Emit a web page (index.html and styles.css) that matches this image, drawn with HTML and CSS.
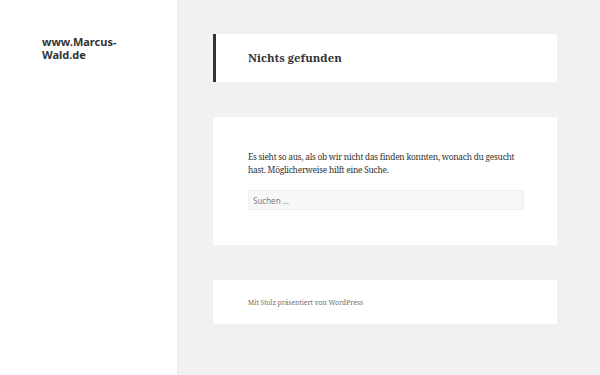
FILE: index.html
```html
<!DOCTYPE html>
<html lang="de">
<head>
    <meta charset="UTF-8">
    <meta name="viewport" content="width=device-width, initial-scale=1.0">
    <title>Nichts gefunden - www.Marcus-Wald.de</title>
    <link rel="stylesheet" href="styles.css">
</head>
<body>
    <div class="site">
        <div class="sidebar">
            <p class="site-title">www.Marcus-Wald.de</p>
        </div>

        <div class="site-content">
            <header class="page-header">
                <h1 class="page-title">Nichts gefunden</h1>
            </header>

            <section class="no-results">
                <p class="no-results-text">
                    Es sieht so aus, als ob wir nicht das finden konnten, wonach du gesucht hast. Möglicherweise hilft eine Suche.
                </p>
                <form class="search-form">
                    <input type="search" class="search-field" placeholder="Suchen …">
                </form>
            </section>

            <footer class="site-footer">
                <span class="site-info">Mit Stolz präsentiert von WordPress</span>
            </footer>
        </div>
    </div>
</body>
</html>
```

FILE: styles.css
```css
body {
    margin: 0;
    padding: 0;
    background: #f1f1f1;
    color: #333333;
    font-family: "Noto Serif", "DejaVu Serif", serif;
}

.site {
    display: flex;
    min-height: 100vh;
}

.sidebar {
    width: 177px;
    flex-shrink: 0;
    background: #ffffff;
    box-shadow: 0 0 3px rgba(0, 0, 0, 0.06);
    padding: 35px 0 0 42px;
    box-sizing: border-box;
}

.site-title {
    margin: 0;
    width: 90px;
    font-family: "Noto Sans", sans-serif;
    font-weight: 700;
    font-size: 11px;
    line-height: 13px;
    color: #333333;
}

.site-content {
    flex: 1;
    padding: 34px 43px 40px 36px;
}

.page-header {
    background: #ffffff;
    border-left: 3px solid #333333;
    padding: 0 32px;
    height: 48px;
    display: flex;
    align-items: center;
}

.page-title {
    margin: 0;
    font-size: 11.4px;
    font-weight: 700;
    line-height: 16px;
}

.no-results {
    background: #ffffff;
    margin-top: 35px;
    padding: 33px 33px 35px 35px;
}

.no-results-text {
    margin: 0 0 14px;
    font-size: 8.4px;
    letter-spacing: -0.25px;
    line-height: 13px;
}

.search-field {
    display: block;
    width: 100%;
    height: 20px;
    box-sizing: border-box;
    margin: 0;
    padding: 0 4px;
    background: #f7f7f7;
    border: 1px solid #f0f0f0;
    font-family: "Noto Sans", sans-serif;
    font-size: 8px;
    color: #333333;
}

.search-field::placeholder {
    color: #808080;
}

.site-footer {
    background: #ffffff;
    margin-top: 35px;
    height: 44px;
    padding: 0 35px;
    display: flex;
    align-items: center;
}

.site-info {
    font-size: 6.7px;
    color: #707070;
}
```
